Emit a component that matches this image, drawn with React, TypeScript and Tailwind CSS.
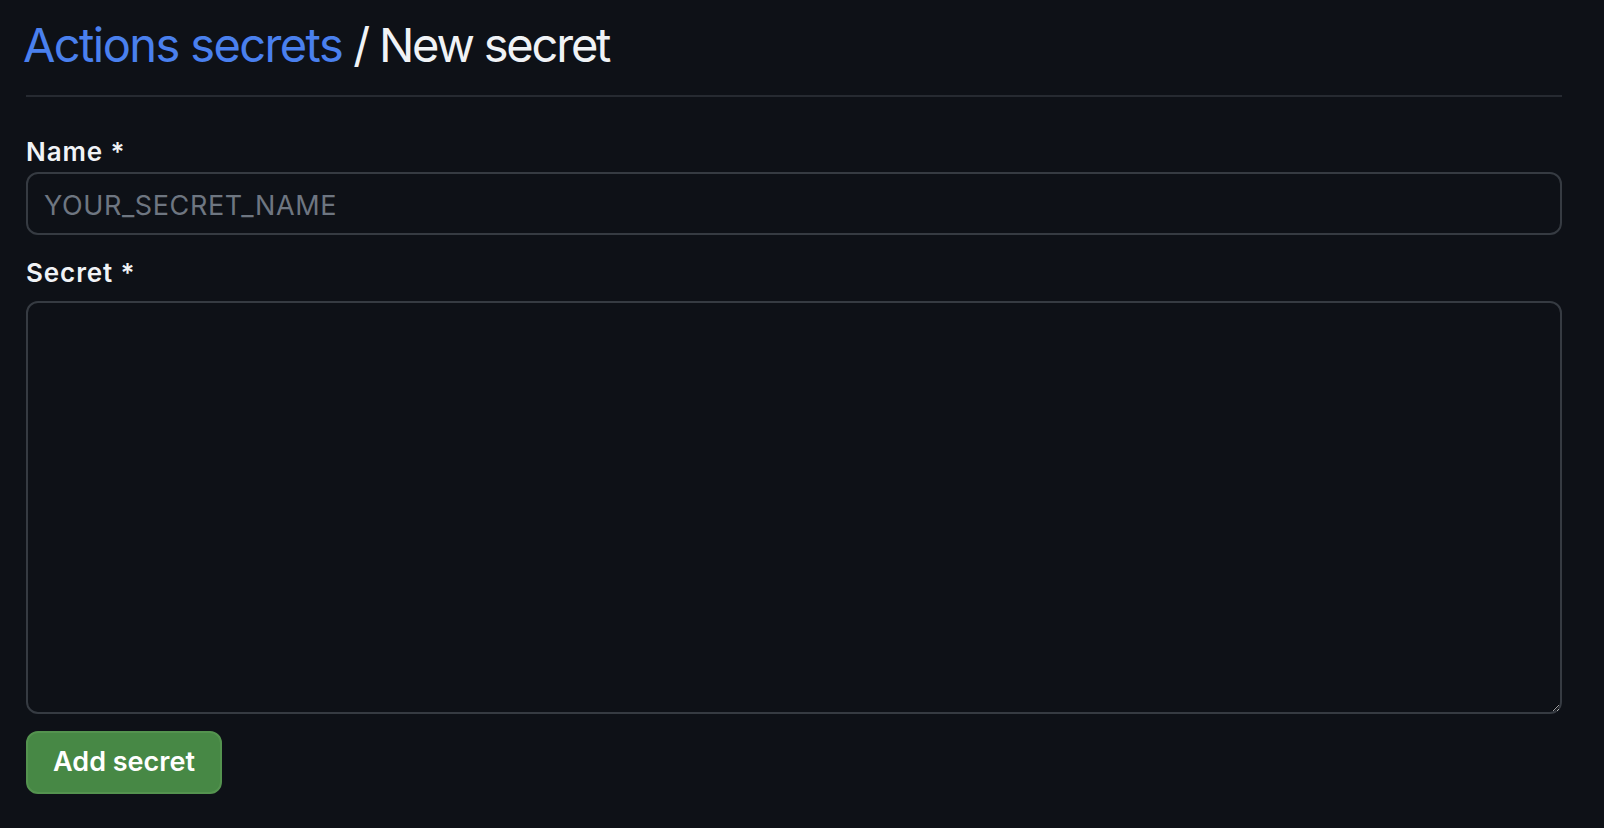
export default function App() {
  return (
    <div className="min-h-screen w-full bg-[#0e1117] font-['Inter','Liberation_Sans',sans-serif] [color-scheme:dark]">
      <div className="w-[1536px] ml-[26px] pt-[17px]">
        <div className="border-b-2 border-[#262a31] pb-[22px]">
          <h1 className="text-[47px] leading-[56px] font-normal tracking-[-1.6px] -ml-[3px]">
            <a href="#" className="text-[#4a80ee]">Actions secrets</a>
            <span className="text-[#f0f3f6] tracking-[-2.2px]"> / New secret</span>
          </h1>
        </div>

        <form onSubmit={(e) => e.preventDefault()} className="flex flex-col">
          <label className="mt-[39px] text-[26px] leading-[32px] font-semibold tracking-[0.9px] text-[#f0f3f6]">
            Name *
          </label>
          <input
            type="text"
            placeholder="YOUR_SECRET_NAME"
            className="mt-[4px] h-[63px] w-full rounded-[12px] border-2 border-[#363b42] bg-[#0e1117] pl-[16px] pt-[4px] text-[27px] tracking-[0.6px] text-[#f0f3f6] placeholder:text-[#6e7681] focus:outline-none"
          />
          <label className="mt-[22px] text-[26px] leading-[32px] font-semibold tracking-[0.9px] text-[#f0f3f6]">
            Secret *
          </label>
          <textarea className="mt-[12px] h-[413px] w-full rounded-[12px] border-2 border-[#363b42] bg-[#0e1117] p-[16px] text-[27px] text-[#f0f3f6] focus:outline-none" />
          <div className="mt-[17px]">
            <button
              type="submit"
              className="h-[63px] w-[196px] rounded-[12px] border-2 border-[#54934f] bg-[#478845] text-[27px] font-semibold text-white"
            >
              Add secret
            </button>
          </div>
        </form>
      </div>
    </div>
  );
}
